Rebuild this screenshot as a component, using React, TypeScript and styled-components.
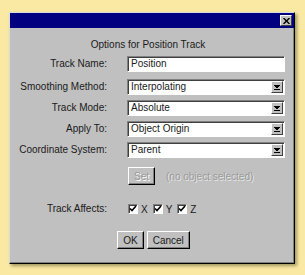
import { Fragment } from 'react'
import styled, { createGlobalStyle } from 'styled-components'

const Global = createGlobalStyle`
  html, body {
    margin: 0;
    padding: 0;
    background: #f9e9a3;
  }
  body {
    font-family: "Liberation Sans", Arial, sans-serif;
    font-size: 10px;
    color: #1a1a1a;
  }
`

const Page = styled.div`
  width: 305px;
  height: 275px;
  padding: 12px 0 0 9px;
  box-sizing: border-box;
`

const Dialog = styled.div`
  width: 286px;
  height: 252px;
  box-sizing: border-box;
  background: #c0c0c0;
  border: 1px solid;
  border-color: #dcdcdc #000 #000 #dcdcdc;
  box-shadow: inset -1px -1px 0 #808080, 2px 2px 3px rgba(60, 50, 20, 0.45);
  display: flex;
  flex-direction: column;
`

const TitleBar = styled.div`
  height: 15px;
  background: #000080;
  display: flex;
  justify-content: flex-end;
  align-items: center;
  padding-right: 2px;
`

const CloseButton = styled.div`
  width: 12px;
  height: 11px;
  box-sizing: border-box;
  background: #c0c0c0;
  border: 1px solid;
  border-color: #fff #404040 #404040 #fff;
  display: flex;
  align-items: center;
  justify-content: center;
`

const Heading = styled.div`
  text-align: center;
  margin-top: 11px;
  padding-right: 8px;
  line-height: 12px;
  height: 12px;
`

const Form = styled.div`
  display: grid;
  grid-template-columns: 97px 158px;
  column-gap: 20px;
  margin-top: 5px;
`

const Label = styled.div<{ $gap: number }>`
  text-align: right;
  line-height: 16px;
  height: 16px;
  margin-top: ${p => p.$gap}px;
  white-space: nowrap;
`

const Field = styled.div<{ $gap: number }>`
  height: 16px;
  box-sizing: border-box;
  background: #fff;
  border: 1px solid;
  border-color: #808080 #fff #fff #808080;
  box-shadow: inset 1px 1px 0 #404040;
  margin-top: ${p => p.$gap}px;
  display: flex;
  align-items: center;
  padding-left: 3px;
  line-height: 14px;
`

const FieldText = styled.span`
  flex: 1;
`

const ArrowButton = styled.div`
  width: 12px;
  height: 12px;
  box-sizing: border-box;
  margin-right: 1px;
  background: #c0c0c0;
  border: 1px solid;
  border-color: #fff #404040 #404040 #fff;
  display: flex;
  align-items: center;
  justify-content: center;
`

const SetRow = styled.div`
  display: flex;
  align-items: center;
  gap: 11px;
  margin: 9px 0 0 118px;
`

const Button = styled.div<{ $pad: number; $disabled?: boolean }>`
  height: 18px;
  box-sizing: border-box;
  padding: 0 ${p => p.$pad}px;
  background: #c0c0c0;
  border: 1px solid;
  border-color: #fff #000 #000 #fff;
  box-shadow: inset -1px -1px 0 #808080;
  display: flex;
  align-items: center;
  justify-content: center;
  color: ${p => (p.$disabled ? '#9a9a9a' : '#1a1a1a')};
  text-shadow: ${p => (p.$disabled ? '1px 1px 0 #fff' : 'none')};
`

const Hint = styled.span`
  color: #9a9a9a;
  text-shadow: 1px 1px 0 #e6e6e6;
`

const AffectsRow = styled.div`
  display: grid;
  grid-template-columns: 97px auto;
  column-gap: 21px;
  margin-top: 16px;
  align-items: center;
`

const Checks = styled.div`
  display: flex;
  align-items: center;
  gap: 5px;
`

const Check = styled.label`
  display: flex;
  align-items: center;
  gap: 3px;
`

const Box = styled.span`
  width: 10px;
  height: 10px;
  box-sizing: border-box;
  background: #fff;
  border: 1px solid;
  border-color: #808080 #fff #fff #808080;
  box-shadow: inset 1px 1px 0 #404040;
  display: flex;
  align-items: center;
  justify-content: center;
`

const Footer = styled.div`
  display: flex;
  justify-content: center;
  gap: 3px;
  margin-top: 14px;
  padding-left: 3px;
`

const Arrow = () => (
  <svg width="6" height="5" viewBox="0 0 6 5">
    <path d="M0 0h6v1H0z M1 1h4v1H1z M2 2h2v1H2z" fill="#000" />
    <path d="M0 4h6v1H0z" fill="#000" />
  </svg>
)

const Tick = () => (
  <svg width="8" height="8" viewBox="0 0 8 8">
    <path d="M1 3.5 L3 5.5 L7 1" stroke="#000" strokeWidth="1.6" fill="none" />
  </svg>
)

const rows = [
  { label: 'Track Name:', value: 'Position', select: false, gap: 0 },
  { label: 'Smoothing Method:', value: 'Interpolating', select: true, gap: 7 },
  { label: 'Track Mode:', value: 'Absolute', select: true, gap: 5 },
  { label: 'Apply To:', value: 'Object Origin', select: true, gap: 5 },
  { label: 'Coordinate System:', value: 'Parent', select: true, gap: 5 },
]

const App = () => {
  return (
    <Page>
      <Global />
      <Dialog>
        <TitleBar>
          <CloseButton>
            <svg width="7" height="6" viewBox="0 0 7 6">
              <path d="M0.5 0 L6.5 6 M6.5 0 L0.5 6" stroke="#000" strokeWidth="1.4" />
            </svg>
          </CloseButton>
        </TitleBar>
        <Heading>Options for Position Track</Heading>
        <Form>
          {rows.map(r => (
            <Fragment key={r.label}>
              <Label $gap={r.gap}>{r.label}</Label>
              <Field $gap={r.gap}>
                <FieldText>{r.value}</FieldText>
                {r.select && (
                  <ArrowButton>
                    <Arrow />
                  </ArrowButton>
                )}
              </Field>
            </Fragment>
          ))}
        </Form>
        <SetRow>
          <Button $pad={5} $disabled>Set</Button>
          <Hint>(no object selected)</Hint>
        </SetRow>
        <AffectsRow>
          <Label $gap={0}>Track Affects:</Label>
          <Checks>
            {['X', 'Y', 'Z'].map(a => (
              <Check key={a}>
                <Box><Tick /></Box>
                {a}
              </Check>
            ))}
          </Checks>
        </AffectsRow>
        <Footer>
          <Button $pad={5}>OK</Button>
          <Button $pad={5}>Cancel</Button>
        </Footer>
      </Dialog>
    </Page>
  )
}

export default App
